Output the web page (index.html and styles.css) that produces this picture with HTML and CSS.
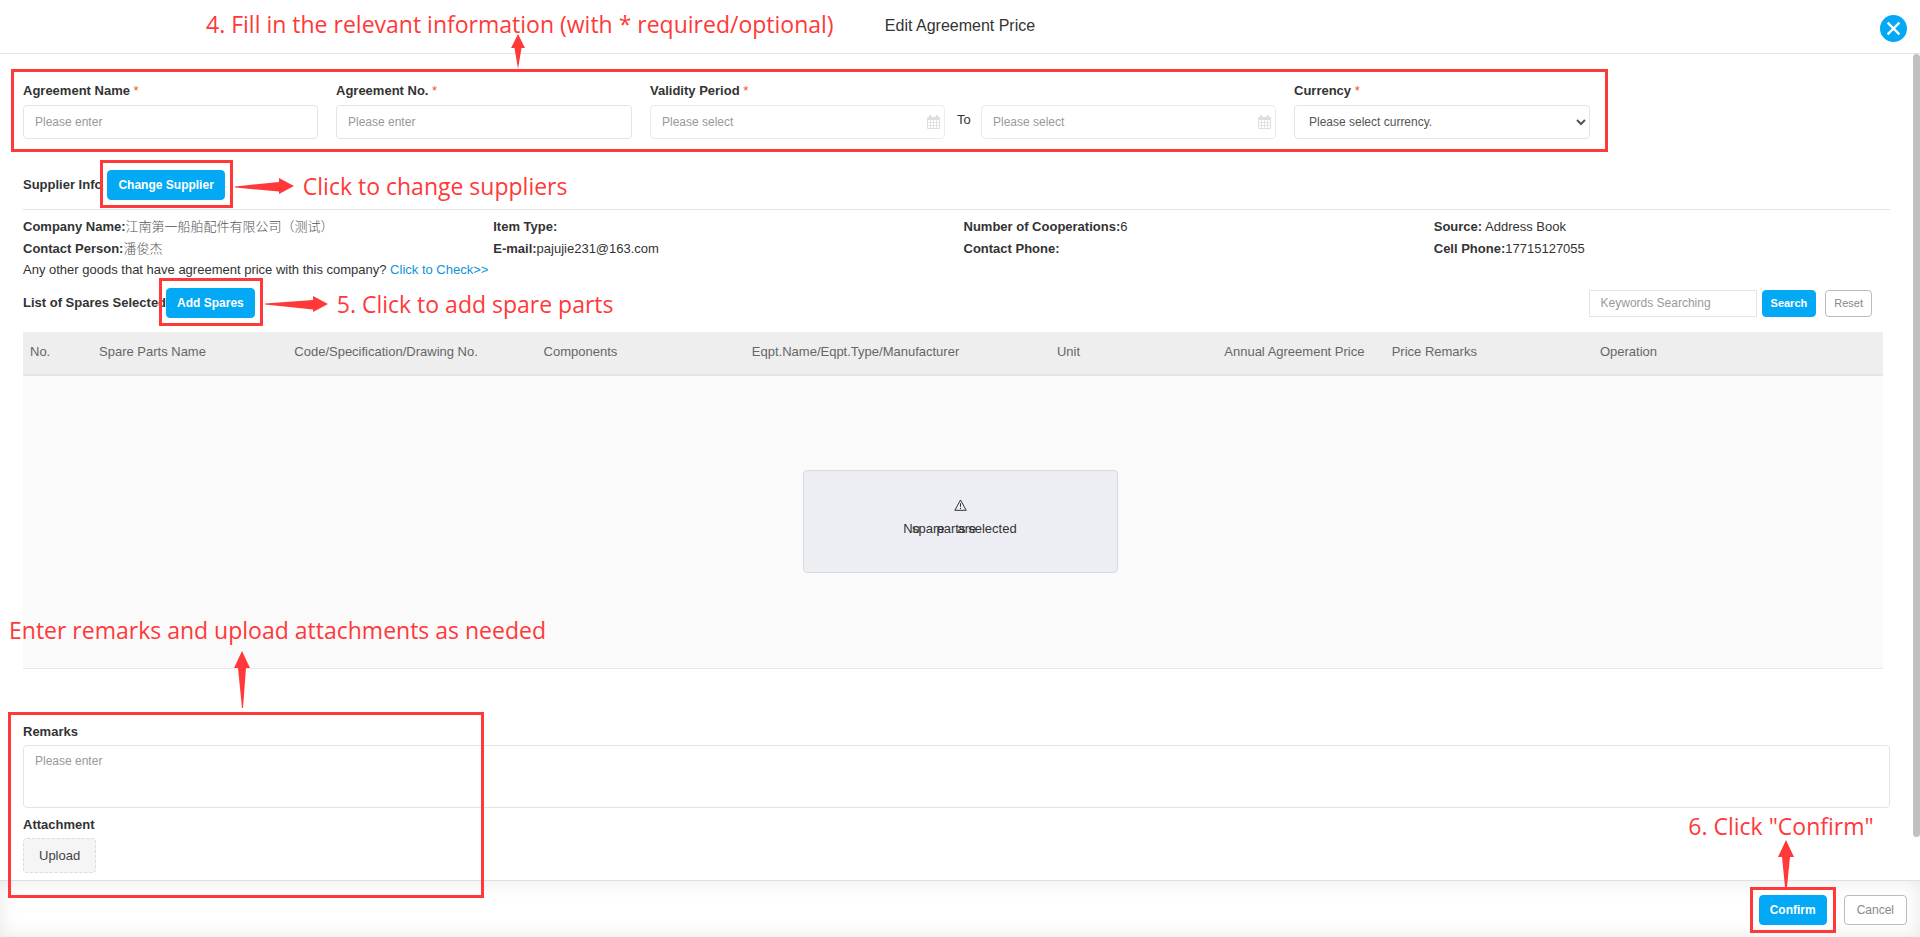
FILE: index.html
```html
<!DOCTYPE html>
<html lang="en">
<head>
<meta charset="utf-8">
<title>Edit Agreement Price</title>
<link rel="stylesheet" href="styles.css">
</head>
<body>
<div class="dialog">
  <header class="dialog-head">
    <h1 class="dialog-title">Edit Agreement Price</h1>
    <p class="note note-fill">4. Fill in the relevant information (with * required/optional)</p>
    <button class="close" type="button" aria-label="Close">
      <svg width="27" height="27" viewBox="0 0 27 27"><circle cx="13.5" cy="13.5" r="13.5" fill="#03a9f4"/><path d="M7.6 7.6l11.8 11.8M19.4 7.6L7.6 19.4" stroke="#fff" stroke-width="2.2" fill="none"/></svg>
    </button>
  </header>

  <main class="dialog-body">
    <div class="scroll-thumb"></div>

    <form class="fields">
      <div class="field">
        <label class="label" for="name">Agreement Name <span class="req">*</span></label>
        <input class="input" id="name" type="text" placeholder="Please enter">
      </div>
      <div class="field">
        <label class="label" for="number">Agreement No. <span class="req">*</span></label>
        <input class="input" id="number" type="text" placeholder="Please enter">
      </div>
      <div class="field">
        <label class="label" for="from">Validity Period <span class="req">*</span></label>
        <div class="period">
          <div class="date">
            <input class="input" id="from" type="text" placeholder="Please select">
            <svg class="calendar" width="13" height="14" viewBox="0 0 13 14"><path fill="#dedede" fill-rule="evenodd" d="M1 2h1V1q0-1 1.200-1T4.400 1v1h4.200V1q0-1 1.200-1T11 1v1h1q1 0 1 1v10q0 1-1 1H1q-1 0-1-1V3q0-1 1-1zM1 5v2.200h2.200V5zM4 5v2.200h2.200V5zM7 5v2.200h2.200V5zM10 5v2.200h2V5zM1 8v2.200h2.200V8zM4 8v2.200h2.200V8zM7 8v2.200h2.200V8zM10 8v2.200h2V8zM1 11v2h2.200v-2zM4 11v2h2.200v-2zM7 11v2h2.200v-2zM10 11v2h2v-2z"/></svg>
          </div>
          <label class="to" for="until">To</label>
          <div class="date">
            <input class="input" id="until" type="text" placeholder="Please select">
            <svg class="calendar" width="13" height="14" viewBox="0 0 13 14"><path fill="#dedede" fill-rule="evenodd" d="M1 2h1V1q0-1 1.200-1T4.400 1v1h4.200V1q0-1 1.200-1T11 1v1h1q1 0 1 1v10q0 1-1 1H1q-1 0-1-1V3q0-1 1-1zM1 5v2.200h2.200V5zM4 5v2.200h2.200V5zM7 5v2.200h2.200V5zM10 5v2.200h2V5zM1 8v2.200h2.200V8zM4 8v2.200h2.200V8zM7 8v2.200h2.200V8zM10 8v2.200h2V8zM1 11v2h2.200v-2zM4 11v2h2.200v-2zM7 11v2h2.200v-2zM10 11v2h2v-2z"/></svg>
          </div>
        </div>
      </div>
      <div class="field">
        <label class="label" for="currency">Currency <span class="req">*</span></label>
        <div class="choice">
          <select class="input select" id="currency"><option>Please select currency.</option></select>
          <svg class="chevron" width="10" height="7" viewBox="0 0 10 7"><path d="M1 1l4 4 4-4" stroke="#555" stroke-width="2" fill="none"/></svg>
        </div>
      </div>
      <div class="frame frame-fields"></div>
      <svg class="arrow arrow-fields" width="14" height="35" viewBox="0 0 14 35"><path d="M7 0l7 14h-3.500L7 35 3.500 14H0z"/></svg>
    </form>

    <section class="supplier">
      <div class="section-head section-line">
        <h2 class="label">Supplier Info</h2>
        <div class="target">
          <button class="btn primary" type="button">Change Supplier</button>
          <div class="frame frame-button"></div>
          <div class="pointer">
            <svg class="shape" width="59" height="16" viewBox="0 0 59 16"><path d="M59 8L44 16v-2.500L0 9.500v-1L44 4V0z"/></svg>
            <p class="note">Click to change suppliers</p>
          </div>
        </div>
      </div>
      <div class="facts">
        <div><b>Company Name:</b><span class="cjk">江南第一船舶配件有限公司（测试）</span></div>
        <div><b>Item Type:</b></div>
        <div><b>Number of Cooperations:</b>6</div>
        <div><b>Source:</b> Address Book</div>
        <div><b>Contact Person:</b><span class="cjk">潘俊杰</span></div>
        <div><b>E-mail:</b>pajujie231@163.com</div>
        <div><b>Contact Phone:</b></div>
        <div><b>Cell Phone:</b>17715127055</div>
      </div>
      <p class="question">Any other goods that have agreement price with this company? <a class="link" href="#">Click to Check&gt;&gt;</a></p>
    </section>

    <section class="spares">
      <div class="section-head">
        <h2 class="label">List of Spares Selected</h2>
        <div class="target">
          <button class="btn primary" type="button">Add Spares</button>
          <div class="frame frame-button"></div>
          <div class="pointer">
            <svg class="shape" width="63" height="16" viewBox="0 0 63 16"><path d="M63 8L48 16v-2.500L0 8.500v-1L48 4V0z"/></svg>
            <p class="note">5. Click to add spare parts</p>
          </div>
        </div>
        <div class="search">
          <input class="input keywords" type="text" placeholder="Keywords Searching" aria-label="Keywords Searching">
          <button class="btn small primary" type="button">Search</button>
          <button class="btn small plain" type="button">Reset</button>
        </div>
      </div>
      <table class="table">
        <colgroup><col class="c-no"><col class="c-name"><col class="c-code"><col class="c-comp"><col class="c-eqpt"><col class="c-unit"><col class="c-price"><col class="c-rem"><col class="c-op"></colgroup>
        <thead>
          <tr><th>No.</th><th>Spare Parts Name</th><th>Code/Specification/Drawing No.</th><th>Components</th><th>Eqpt.Name/Eqpt.Type/Manufacturer</th><th>Unit</th><th>Annual Agreement Price</th><th>Price Remarks</th><th>Operation</th></tr>
        </thead>
        <tbody>
          <tr><td colspan="9">
            <div class="empty">
              <svg width="13" height="12" viewBox="0 0 13 12"><path d="M6.500 1L12.200 11.300H.8zM6.500 4.200v3.600M6.500 8.800v1.200" stroke="#333" fill="none"/></svg>
              <p class="empty-text"><span>No</span> <span>spare</span> <span>parts</span> <span>are</span> <span>selected</span></p>
            </div>
          </td></tr>
        </tbody>
      </table>
    </section>

    <section class="extras">
      <label class="label" for="remarks">Remarks</label>
      <textarea class="input remarks" id="remarks" placeholder="Please enter"></textarea>
      <h2 class="label">Attachment</h2>
      <button class="upload" type="button">Upload</button>
      <div class="frame frame-extras"></div>
      <svg class="arrow arrow-extras" width="16" height="57" viewBox="0 0 16 57"><path d="M8 0l8 17h-4L9 57H8L4 17H0z"/></svg>
      <p class="note note-extras">Enter remarks and upload attachments as needed</p>
    </section>
  </main>

  <footer class="dialog-foot">
    <div class="target">
      <button class="btn primary" type="button">Confirm</button>
      <div class="frame frame-confirm"></div>
      <svg class="arrow arrow-confirm" width="16" height="47" viewBox="0 0 16 47"><path d="M8 0l8 17h-4L9 47H7L4 17H0z"/></svg>
      <p class="note note-confirm">6. Click "Confirm"</p>
    </div>
    <button class="btn plain" type="button">Cancel</button>
  </footer>
</div>
</body>
</html>
```
FILE: styles.css
```css
* { box-sizing: border-box; }

body, h1, h2, p { margin: 0; }

body {
  font: 13px/20px "Liberation Sans", Arial, "Noto Sans CJK SC", sans-serif;
  color: #333;
  background: #fff;
}

button, input, select, textarea { font-family: inherit; margin: 0; }

.dialog {
  display: flex;
  flex-direction: column;
  min-height: 100vh;
}

/* Header */
.dialog-head {
  position: relative;
  display: flex;
  align-items: center;
  justify-content: center;
  height: 54px;
  padding-bottom: 2px;
  border-bottom: 1px solid #e4e4e4;
}

.dialog-title { font-size: 16px; font-weight: 400; }

.close {
  position: absolute;
  top: 15px;
  right: 13px;
  width: 27px;
  height: 27px;
  padding: 0;
  border: 0;
  background: none;
}

.close svg { display: block; }

/* Body */
.dialog-body {
  position: relative;
  flex: 1;
  padding: 27px 30px 7px 23px;
}

.scroll-thumb {
  position: absolute;
  top: 0;
  right: 0;
  bottom: 43px;
  width: 7px;
  border-radius: 4px;
  background: #c0c0c0;
}

.label {
  display: block;
  font-size: 13px;
  font-weight: 700;
  line-height: 20px;
}

.req { color: #f4511e; font-weight: 400; }

.fields {
  position: relative;
  display: grid;
  grid-template-columns: 295fr 296fr 626fr 296fr 282fr;
  gap: 18px;
}

.field .label { margin-bottom: 4px; }

.input {
  display: block;
  width: 100%;
  height: 34px;
  padding: 0 11px;
  border: 1px solid #e4e4e4;
  border-radius: 4px;
  background: #fff;
  color: #555;
  font-size: 12px;
}

.input::placeholder { color: #999; opacity: 1; }

.select { appearance: none; padding-left: 14px; }

.choice, .date { position: relative; flex: 1; }

.date .input { border-color: #ebebeb; }

.chevron {
  position: absolute;
  top: 14px;
  right: 4px;
}

.calendar {
  position: absolute;
  top: 10px;
  right: 5px;
}

.period { display: flex; }

.to { width: 36px; padding: 5px 0 0 12px; }

/* Supplier */
.section-head { display: flex; align-items: center; }

.supplier .section-head { gap: 5px; margin-top: 31px; }

.section-line { padding-bottom: 9px; border-bottom: 1px solid #e4e4e4; }

.target { position: relative; }

.btn {
  display: block;
  height: 30px;
  padding: 0 10px;
  border: 1px solid #03a9f4;
  border-radius: 4px;
  font-size: 12px;
  white-space: nowrap;
}

.primary { background: #03a9f4; color: #fff; font-weight: 700; }

.plain { border-color: #bbb; background: #fff; color: #888; }

.small { height: 27px; padding: 0 8px; font-size: 11px; }

.facts {
  display: grid;
  grid-template-columns: repeat(4, 1fr);
  margin: 6px -14px 0 0;
  line-height: 22px;
}

.cjk { color: #555; font-weight: 300; }

.link { color: #0d94d6; text-decoration: none; }

/* Spares */
.spares .section-head { margin-top: 8px; }

.search {
  display: flex;
  gap: 5px;
  margin-left: auto;
  padding-right: 18px;
}

.search .plain { margin-left: 4px; }

.keywords { width: 168px; height: 27px; border-radius: 0; }

.table {
  width: calc(100% - 7px);
  margin-top: 14px;
  border-collapse: separate;
  border-spacing: 0;
  table-layout: fixed;
}

.table th {
  height: 44px;
  padding: 0 0 2px 7px;
  border-bottom: 2px solid #e1e6e9;
  background: #eee;
  color: #666;
  font-weight: 400;
  text-align: left;
  white-space: nowrap;
}

.table td {
  height: 293px;
  padding: 0 0 2px 14px;
  border-bottom: 1px solid #e8e8e8;
  background: #fafafa;
}

.c-no { width: 69px; }
.c-name { width: 10.5%; }
.c-code { width: 13.4%; }
.c-comp { width: 11.2%; }
.c-eqpt { width: 16.4%; }
.c-unit { width: 9%; }
.c-price { width: 9%; }
.c-rem { width: 11.2%; }

.empty {
  display: flex;
  flex-direction: column;
  align-items: center;
  gap: 8px;
  width: 315px;
  height: 103px;
  margin: 0 auto;
  padding-top: 28px;
  border: 1px solid #d8dae0;
  border-radius: 4px;
  background: #edeef3;
}

.empty-text { display: flex; }
.empty-text span + span { margin-left: -8px; }

/* Remarks and attachment */
.extras { position: relative; margin-top: 53px; }

.remarks {
  height: 63px;
  margin: 3px 0 7px;
  padding: 8px 11px;
  resize: none;
}

.upload {
  display: block;
  height: 35px;
  margin-top: 3px;
  padding: 0 15px;
  border: 1px dashed #ddd;
  border-radius: 4px;
  background: #f5f5f5;
  color: #444;
  font-size: 13px;
}

/* Footer */
.dialog-foot {
  display: flex;
  gap: 17px;
  align-items: flex-start;
  justify-content: flex-end;
  height: 57px;
  padding: 14px 13px 0;
  border-top: 1px solid #e0e0e0;
  box-shadow: inset 0 0 20px #e8e8e8;
}

.dialog-foot .plain { padding: 0 12px; }

/* Guide marks */
.note {
  color: #ff3939;
  font: 23px/32px "Open Sans", "Noto Sans", sans-serif;
  white-space: nowrap;
}

.frame {
  position: absolute;
  border: 3px solid #ff3939;
  pointer-events: none;
}

.arrow { position: absolute; fill: #ff3939; }
.shape { flex: none; fill: #ff3939; }

.pointer {
  position: absolute;
  top: 0;
  left: calc(100% + 10px);
  display: flex;
  align-items: center;
  gap: 9px;
}

.note-fill { position: absolute; top: 8px; left: 206px; }
.note-extras { position: absolute; top: -108px; left: -14px; }
.note-confirm { position: absolute; top: -85px; right: -47px; }

.frame-fields { inset: -12px 282px -13px -12px; }
.frame-button { inset: -10px -8px -8px -7px; }
.frame-extras { top: -10px; left: -15px; width: 476px; bottom: -25px; }
.frame-confirm { inset: -8px -9px; }

.arrow-fields { top: -47px; left: 488px; }
.arrow-extras { top: -71px; left: 211px; }
.arrow-confirm { top: -55px; left: 19px; }
```
